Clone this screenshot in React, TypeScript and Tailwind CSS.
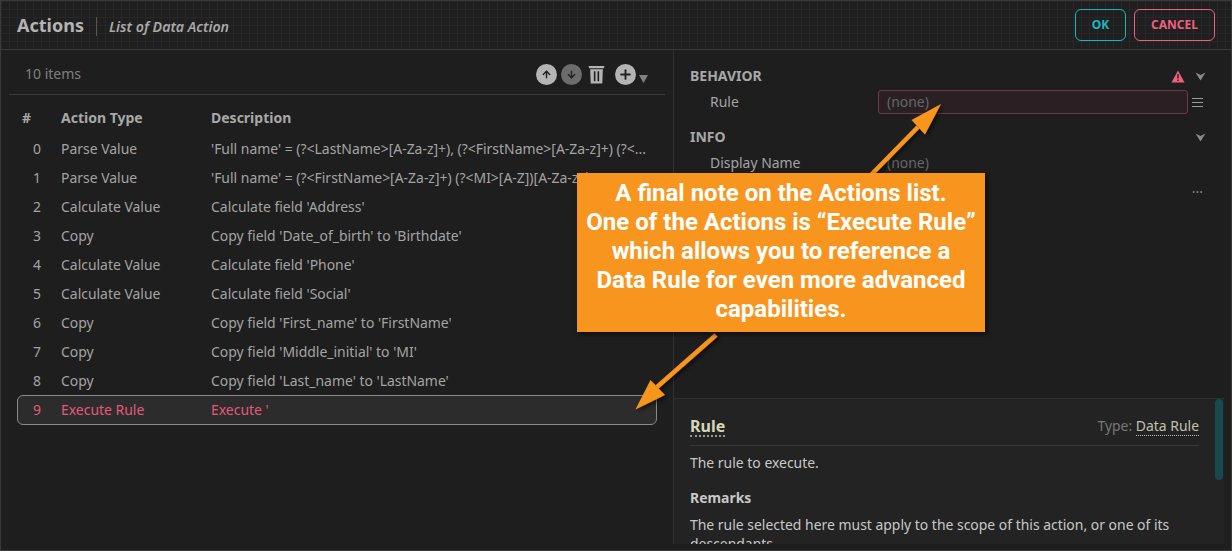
import { ArrowDown, ArrowUp, Plus } from "lucide-react";

const ROWS = [
  { type: "Parse Value", desc: "'Full name' = (?<LastName>[A-Za-z]+), (?<FirstName>[A-Za-z]+) (?<..." },
  { type: "Parse Value", desc: "'Full name' = (?<FirstName>[A-Za-z]+) (?<MI>[A-Z])[A-Za-z]* (?<LastName>..." },
  { type: "Calculate Value", desc: "Calculate field 'Address'" },
  { type: "Copy", desc: "Copy field 'Date_of_birth' to 'Birthdate'" },
  { type: "Calculate Value", desc: "Calculate field 'Phone'" },
  { type: "Calculate Value", desc: "Calculate field 'Social'" },
  { type: "Copy", desc: "Copy field 'First_name' to 'FirstName'" },
  { type: "Copy", desc: "Copy field 'Middle_initial' to 'MI'" },
  { type: "Copy", desc: "Copy field 'Last_name' to 'LastName'" },
];

function Chevron() {
  return (
    <svg width="11" height="9" viewBox="0 0 11 9" className="fill-[#8a8a8a]">
      <path d="M0.5 0.5 L5.5 3 L10.5 0.5 L5.5 8.5 Z" />
    </svg>
  );
}

function CircleButton({ down }: { down?: boolean }) {
  const Icon = down ? ArrowDown : ArrowUp;
  return (
    <span className={`flex h-[21px] w-[21px] items-center justify-center rounded-full ${down ? "bg-[#6c6c6c]" : "bg-[#b4b4b4]"}`}>
      <Icon size={11} strokeWidth={3.2} className="text-[#222222]" />
    </span>
  );
}

export default function App() {
  return (
    <div className="relative flex h-[551px] w-[1232px] flex-col overflow-hidden border border-[#3a3a3a] bg-[#1e1e1e] font-['Noto_Sans',sans-serif] text-[13.95px] text-[#a4a4a4]">
      {/* header */}
      <div className="flex h-[49px] shrink-0 items-center border-b border-[#3a3a3a] bg-[#1f1f1f] bg-[linear-gradient(#272727_1px,transparent_1px),linear-gradient(90deg,#272727_1px,transparent_1px)] bg-[size:8px_8px] pr-4 pl-4">
        <span className="text-lg leading-6 font-bold text-[#b4b4b4]">Actions</span>
        <span className="mt-[3px] ml-3 h-[19px] w-px bg-[#555555]" />
        <span className="mt-1 ml-3 text-[14.2px] font-semibold text-[#a8a8a8] italic">List of Data Action</span>
        <div className="ml-auto flex gap-2">
          <button className="h-8 w-[51px] rounded-md border border-[#1fb5c0] text-xs font-bold text-[#1fb5c0]">OK</button>
          <button className="h-8 w-[81px] rounded-md border border-[#ee5f80] text-xs font-bold text-[#ee5f80]">CANCEL</button>
        </div>
      </div>

      <div className="flex min-h-0 flex-1 pb-[6px]">
        {/* left list */}
        <div className="flex w-[673px] shrink-0 flex-col border-r border-[#333333] pr-2 pl-2">
          <div className="flex h-[45px] shrink-0 items-center border-b border-[#3a3a3a] pt-1 pr-[17px] pl-4">
            <span className="text-sm text-[#808080]">10 items</span>
            <div className="ml-auto flex items-center">
              <CircleButton />
              <span className="ml-1" />
              <CircleButton down />
              <svg width="17" height="19" viewBox="0 0 16 18" className="ml-[6px] fill-[#b4b4b4]">
                <path d="M0.5 1 H15.5 L15 3 H1 Z M2 4 H14 L13.5 17.5 H2.5 Z" />
                <path d="M5.5 6 H7 V15.5 H5.5 Z M9 6 H10.5 V15.5 H9 Z" className="fill-[#1e1e1e]" />
              </svg>
              <span className="ml-[10px] flex h-[21px] w-[21px] items-center justify-center rounded-full bg-[#b4b4b4]">
                <Plus size={15} strokeWidth={3} className="text-[#222222]" />
              </span>
              <svg width="9" height="8" viewBox="0 0 9 8" className="mt-[9px] ml-[3px] fill-[#808080]">
                <path d="M0 0 H9 L4.5 8 Z" />
              </svg>
            </div>
          </div>
          <div className="flex h-10 shrink-0 items-center pt-[6px] text-sm font-bold text-[#a8a8a8]">
            <span className="w-[52px] pl-[13px]">#</span>
            <span className="w-[150px]">Action Type</span>
            <span>Description</span>
          </div>
          {ROWS.map((row, i) => (
            <div key={i} className="flex h-[29px] shrink-0 items-center">
              <span className="w-[52px] shrink-0 pr-5 text-right">{i}</span>
              <span className="w-[150px] shrink-0">{row.type}</span>
              <span className="whitespace-nowrap">{row.desc}</span>
            </div>
          ))}
          <div className="-mt-px mr-2 ml-2 flex h-[30px] shrink-0 items-center rounded-md border border-[#8a8a8a] bg-[#2c2c2c] text-[#e5587c]">
            <span className="w-[43px] shrink-0 pr-5 text-right">9</span>
            <span className="w-[150px] shrink-0">Execute Rule</span>
            <span>Execute '</span>
          </div>
        </div>

        {/* right side */}
        <div className="flex min-w-0 flex-1 flex-col">
          <div className="flex min-h-0 flex-1 flex-col pt-[14px] pl-4">
            <div className="flex h-6 items-center pr-[25px] text-sm font-bold text-[#a8a8a8]">
              BEHAVIOR
              <svg width="14" height="13" viewBox="0 0 14 13" className="mr-[10px] ml-auto">
                <path d="M7 0.5 L13.5 12.5 H0.5 Z" className="fill-[#ee5f80]" />
                <path d="M6.3 4 H7.7 V8.5 H6.3 Z M6.3 9.5 H7.7 V11 H6.3 Z" className="fill-[#1e1e1e]" />
              </svg>
              <Chevron />
            </div>
            <div className="mt-[2px] flex h-6 items-center">
              <span className="w-[188px] pl-5">Rule</span>
              <div className="flex h-6 w-[310px] items-center rounded-[3px] border border-[#6e3a4a] bg-[#2a2024] pl-2 text-[#666666]">(none)</div>
              <svg width="11" height="9" viewBox="0 0 11 9" className="ml-1 fill-[#9a9a9a]">
                <path d="M0 0 H11 V1 H0 Z M0 4 H11 V5 H0 Z M0 8 H11 V9 H0 Z" />
              </svg>
            </div>
            <div className="mt-[11px] flex h-6 items-center pr-[25px] text-sm font-bold text-[#a8a8a8]">
              INFO
              <span className="ml-auto flex">
                <Chevron />
              </span>
            </div>
            <div className="mt-[2px] flex h-6 items-center">
              <span className="w-[197px] pl-5">Display Name</span>
              <span className="text-[#666666]">(none)</span>
            </div>
            <div className="mt-px flex h-6 items-center justify-end pr-7 text-[#888888]">...</div>
          </div>

          {/* help panel */}
          <div className="relative mr-[7px] h-[146px] shrink-0 overflow-hidden border-t border-[#303030] bg-[#232323] pr-[25px] pl-4 text-[#c8c8c8]">
            <div className="flex h-[47px] items-end justify-between border-b border-[#383838] pb-2">
              <span className="border-b-2 border-dotted border-[#9a9a80] text-base leading-[18px] font-bold text-[#d6d6b8]">Rule</span>
              <span className="text-[#777777]">
                Type: <span className="border-b border-dotted border-[#bbbbbb] text-[#c0c0b0]">Data Rule</span>
              </span>
            </div>
            <p className="mt-[7px] leading-5">The rule to execute.</p>
            <p className="mt-[15px] leading-5 font-bold">Remarks</p>
            <p className="mt-[7px] leading-[19px]">The rule selected here must apply to the scope of this action, or one of its descendants.</p>
            <div className="absolute top-0 right-px h-[81px] w-2 rounded bg-[#174a50]" />
          </div>
        </div>
      </div>

      {/* arrows */}
      <svg width="1232" height="551" viewBox="0 0 1232 551" className="pointer-events-none absolute -top-px -left-px">
        <defs>
          <filter id="shadow" x="-20%" y="-20%" width="140%" height="140%">
            <feDropShadow dx="2" dy="2" stdDeviation="2" floodColor="#000000" floodOpacity="0.6" />
          </filter>
        </defs>
        <g filter="url(#shadow)" className="fill-[#f8951f] stroke-[#f8951f]">
          <path d="M868 178 L918 127" strokeWidth="4.5" fill="none" />
          <path d="M941 104 L925 134.5 L911.5 120 Z" strokeWidth="0" />
          <path d="M716 335 L657 387" strokeWidth="4.5" fill="none" />
          <path d="M635.5 409.5 L650.5 380 L665 395 Z" strokeWidth="0" />
        </g>
      </svg>

      {/* callout */}
      <div className="absolute top-[172px] left-[576px] flex h-[159px] w-[408px] items-center justify-center bg-[#f8951f] pb-[2px] text-center font-['Roboto',sans-serif] text-2xl leading-[29px] font-bold text-white shadow-[2px_2px_5px_rgba(0,0,0,0.6)]">
        <p>
          A final note on the Actions list.
          <br />
          One of the Actions is “Execute Rule”
          <br />
          which allows you to reference a
          <br />
          Data Rule for even more advanced
          <br />
          capabilities.
        </p>
      </div>
    </div>
  );
}
